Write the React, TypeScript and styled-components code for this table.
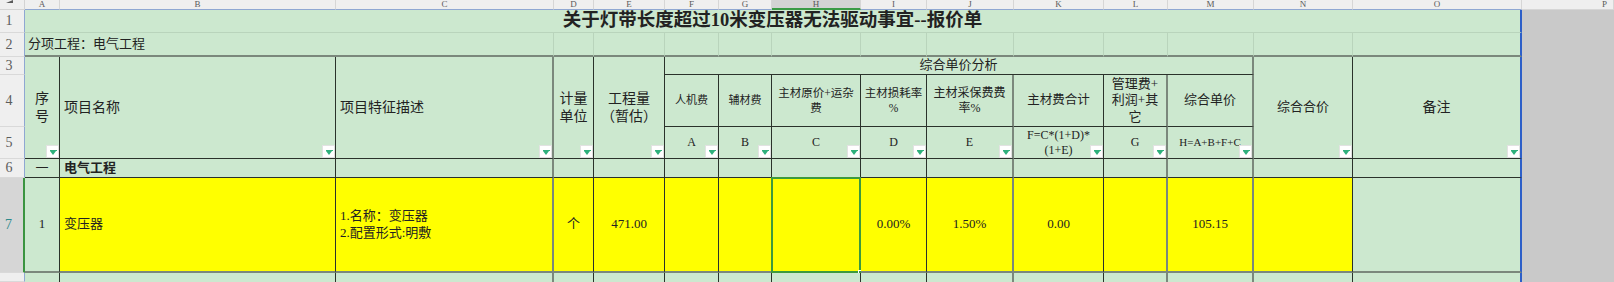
import React from 'react';
import styled, { createGlobalStyle } from 'styled-components';

type Line = 'none' | 'grid' | 'thin' | 'thick' | 'blue';

const LINE: Record<Line, string> = {
  none: 'none',
  grid: '1px solid #b9d4bc',
  thin: '1px solid #2a322b',
  thick: '2px solid #7b887c',
  blue: '2px solid #2d5fc8',
};

const GREEN = '#cce8cf';
const YELLOW = '#ffff00';

const COL_W = [25, 35, 276, 218, 40, 71, 54, 53, 89, 66, 87, 90, 64, 86, 99, 169];
const ROW_H = [10, 23, 24, 18, 52, 32, 19, 95, 9];
const LETTERS = 'ABCDEFGHIJKLMNO'.split('');
const RB: Line[] = ['thin', 'thin', 'thick', 'thin', 'thin', 'thin', 'thin', 'thin', 'thin', 'thick', 'thin', 'thick', 'thick', 'thin', 'blue'];

const GlobalStyle = createGlobalStyle`
  *, *::before, *::after { box-sizing: border-box; }
  html, body { margin: 0; padding: 0; background: #ffffff; }
  body { font-family: "Liberation Serif", "Noto Sans CJK SC", serif; }
`;

const Sheet = styled.div`
  display: grid;
  grid-template-columns: ${COL_W.map((w) => `${w}px`).join(' ')} 1fr;
  grid-template-rows: ${ROW_H.map((h) => `${h}px`).join(' ')};
  width: 1614px;
  height: 282px;
  overflow: hidden;
  background: #efefef;
  color: #242424;
`;

const Corner = styled.div`
  grid-column: 1;
  grid-row: 1;
  position: relative;
  background: #efefef;
  border-right: 1px solid #d3d3d3;
  border-bottom: 1px solid #d3d3d3;
  &::after {
    content: '';
    position: absolute;
    left: 6px;
    top: 0;
    border-left: 7px solid transparent;
    border-bottom: 3px solid #5a5a5a;
  }
`;

const ColHead = styled.div<{ $col: number; $sel?: boolean; $end?: boolean }>`
  grid-column: ${(p) => p.$col};
  grid-row: 1;
  display: flex;
  align-items: center;
  justify-content: ${(p) => (p.$end ? 'flex-end' : 'center')};
  padding: 0 ${(p) => (p.$end ? '6px' : '0')} 0 0;
  background: ${(p) => (p.$sel ? '#d3d3d3' : '#efefef')};
  border-right: 1px solid #d6d6d6;
  border-bottom: ${(p) => (p.$sel ? '2px solid #3a9a45' : p.$end ? '1px solid #d6d6d6' : '1px solid #8fa7d2')};
  font: 9px/9px "Liberation Serif", serif;
  color: #5a5a5a;
`;

const RowHead = styled.div<{ $row: number; $sel?: boolean }>`
  grid-column: 1;
  grid-row: ${(p) => p.$row};
  display: flex;
  align-items: center;
  justify-content: center;
  padding-right: 6px;
  background: ${(p) => (p.$sel ? '#d6d6d6' : '#efefef')};
  border-bottom: 1px solid #d9d9d9;
  border-right: ${(p) => (p.$sel ? '2px solid #3a9440' : '1px solid #8fa7d2')};
  font: 14px/1 "Liberation Serif", serif;
  color: ${(p) => (p.$sel ? '#2e8a8c' : '#5c5c5c')};
  overflow: hidden;
`;

const Outside = styled.div`
  grid-column: 17;
  grid-row: 2 / span 8;
  background: #c9c9c9;
`;

type CellProps = {
  $col: number;
  $row: number;
  $span?: number;
  $rows?: number;
  $bg?: string;
  $rb?: Line;
  $bb?: Line;
  $left?: boolean;
  $size?: number;
  $bold?: boolean;
  $pad?: number;
};

const Cell = styled.div<CellProps>`
  position: relative;
  grid-column: ${(p) => p.$col} / span ${(p) => p.$span ?? 1};
  grid-row: ${(p) => p.$row} / span ${(p) => p.$rows ?? 1};
  min-width: 0;
  display: flex;
  align-items: center;
  justify-content: ${(p) => (p.$left ? 'flex-start' : 'center')};
  text-align: ${(p) => (p.$left ? 'left' : 'center')};
  padding: 0 2px 0 ${(p) => (p.$left ? p.$pad ?? 4 : 2)}px;
  background: ${(p) => p.$bg ?? GREEN};
  border-right: ${(p) => LINE[p.$rb ?? 'thin']};
  border-bottom: ${(p) => LINE[p.$bb ?? 'thin']};
  font-size: ${(p) => p.$size ?? 13}px;
  font-weight: ${(p) => (p.$bold ? 700 : 400)};
  line-height: 1.25;
  white-space: nowrap;
  color: #222;
`;

const Filter = styled.span`
  position: absolute;
  right: 0;
  bottom: 0;
  width: 13px;
  height: 13px;
  background: #ffffff;
  border: 1px solid #e2e2e2;
  &::before {
    content: '';
    position: absolute;
    left: 3px;
    top: 4px;
    width: 7px;
    height: 1px;
    background: #2fb07c;
  }
  &::after {
    content: '';
    position: absolute;
    left: 3px;
    top: 5px;
    border-left: 3.5px solid transparent;
    border-right: 3.5px solid transparent;
    border-top: 4px solid #2fb07c;
  }
`;

const Selection = styled.span`
  position: absolute;
  left: -1px;
  top: -1px;
  right: -1px;
  bottom: -2px;
  border: 2px solid #3d9a3d;
  pointer-events: none;
  &::after {
    content: '';
    position: absolute;
    right: -4px;
    bottom: -4px;
    width: 5px;
    height: 5px;
    background: #3d9a3d;
    border: 1px solid #ffffff;
  }
`;

const lines = (t: string[]) =>
  t.map((s, i) => (
    <React.Fragment key={i}>
      {i > 0 && <br />}
      {s}
    </React.Fragment>
  ));

const SUB_HEAD = [
  { t: ['人机费'], s: 11 },
  { t: ['辅材费'], s: 11 },
  { t: ['主材原价+运杂', '费'], s: 11.5 },
  { t: ['主材损耗率', '%'], s: 11.5 },
  { t: ['主材采保费费', '率%'], s: 12 },
  { t: ['主材费合计'], s: 12.5 },
  { t: ['管理费+', '利润+其', '它'], s: 13 },
  { t: ['综合单价'], s: 13 },
];

const SUB_CODE = [
  { t: ['A'], s: 12 },
  { t: ['B'], s: 12 },
  { t: ['C'], s: 12 },
  { t: ['D'], s: 12 },
  { t: ['E'], s: 12 },
  { t: ['F=C*(1+D)*', '(1+E)'], s: 12 },
  { t: ['G'], s: 12 },
  { t: ['H=A+B+F+C'], s: 11 },
];

const ROW7: React.ReactNode[] = [
  '1',
  '变压器',
  lines(['1.名称：变压器', '2.配置形式:明敷']),
  '个',
  '471.00',
  '',
  '',
  '',
  '0.00%',
  '1.50%',
  '0.00',
  '',
  '105.15',
  '',
  '',
];

export default function App() {
  return (
    <>
      <GlobalStyle />
      <Sheet>
        <Corner />
        {LETTERS.map((l, i) => (
          <ColHead key={l} $col={i + 2} $sel={l === 'H'}>
            {l}
          </ColHead>
        ))}
        <ColHead $col={17} $end>
          P
        </ColHead>
        {[1, 2, 3, 4, 5, 6, 7, 8].map((n) => (
          <RowHead key={n} $row={n + 1} $sel={n === 7}>
            {n === 8 ? '' : n}
          </RowHead>
        ))}

        {/* row 1: title */}
        <Cell $col={2} $span={15} $row={2} $rb="blue" $bb="grid" $size={18.5} $bold>
          关于灯带长度超过10米变压器无法驱动事宜--报价单
        </Cell>

        {/* row 2 */}
        <Cell $col={2} $span={3} $row={3} $left $pad={3} $rb="grid" $bb="thick">
          分项工程：电气工程
        </Cell>
        {LETTERS.slice(3).map((l, i) => (
          <Cell key={`r2${l}`} $col={i + 5} $row={3} $rb={l === 'O' ? 'blue' : 'grid'} $bb="thick" />
        ))}

        {/* rows 3-5 header */}
        <Cell $col={2} $row={4} $rows={3} $size={14} $rb="thin">
          {lines(['序', '号'])}
          <Filter />
        </Cell>
        <Cell $col={3} $row={4} $rows={3} $size={14} $left>
          项目名称
          <Filter />
        </Cell>
        <Cell $col={4} $row={4} $rows={3} $size={14} $left $rb="thick">
          项目特征描述
          <Filter />
        </Cell>
        <Cell $col={5} $row={4} $rows={3} $size={14}>
          {lines(['计量', '单位'])}
          <Filter />
        </Cell>
        <Cell $col={6} $row={4} $rows={3} $size={14}>
          {lines(['工程量', '（暂估）'])}
          <Filter />
        </Cell>
        <Cell $col={7} $span={8} $row={4} $rb="thick">
          综合单价分析
        </Cell>
        {SUB_HEAD.map((h, i) => (
          <Cell key={`h4${i}`} $col={i + 7} $row={5} $size={h.s} $rb={RB[i + 5]}>
            <span>{lines(h.t)}</span>
          </Cell>
        ))}
        {SUB_CODE.map((h, i) => (
          <Cell key={`h5${i}`} $col={i + 7} $row={6} $size={h.s} $rb={RB[i + 5]}>
            <span>{lines(h.t)}</span>
            <Filter />
          </Cell>
        ))}
        <Cell $col={15} $row={4} $rows={3}>
          综合合价
          <Filter />
        </Cell>
        <Cell $col={16} $row={4} $rows={3} $size={14} $rb="blue">
          备注
          <Filter />
        </Cell>

        {/* row 6 */}
        {LETTERS.map((l, i) => (
          <Cell key={`r6${l}`} $col={i + 2} $row={7} $rb={RB[i]} $left={l === 'B'} $bold={l === 'B'}>
            {l === 'A' ? '一' : l === 'B' ? '电气工程' : ''}
          </Cell>
        ))}

        {/* row 7 */}
        {LETTERS.map((l, i) => (
          <Cell
            key={`r7${l}`}
            $col={i + 2}
            $row={8}
            $rb={RB[i]}
            $bb="thick"
            $bg={l === 'A' || l === 'O' ? GREEN : YELLOW}
            $left={l === 'B' || l === 'C'}
          >
            <span>{ROW7[i]}</span>
            {l === 'H' && <Selection />}
          </Cell>
        ))}

        {/* row 8 */}
        {LETTERS.map((l, i) => (
          <Cell key={`r8${l}`} $col={i + 2} $row={9} $rb={RB[i]} $bb="none" />
        ))}

        <Outside />
      </Sheet>
    </>
  );
}
